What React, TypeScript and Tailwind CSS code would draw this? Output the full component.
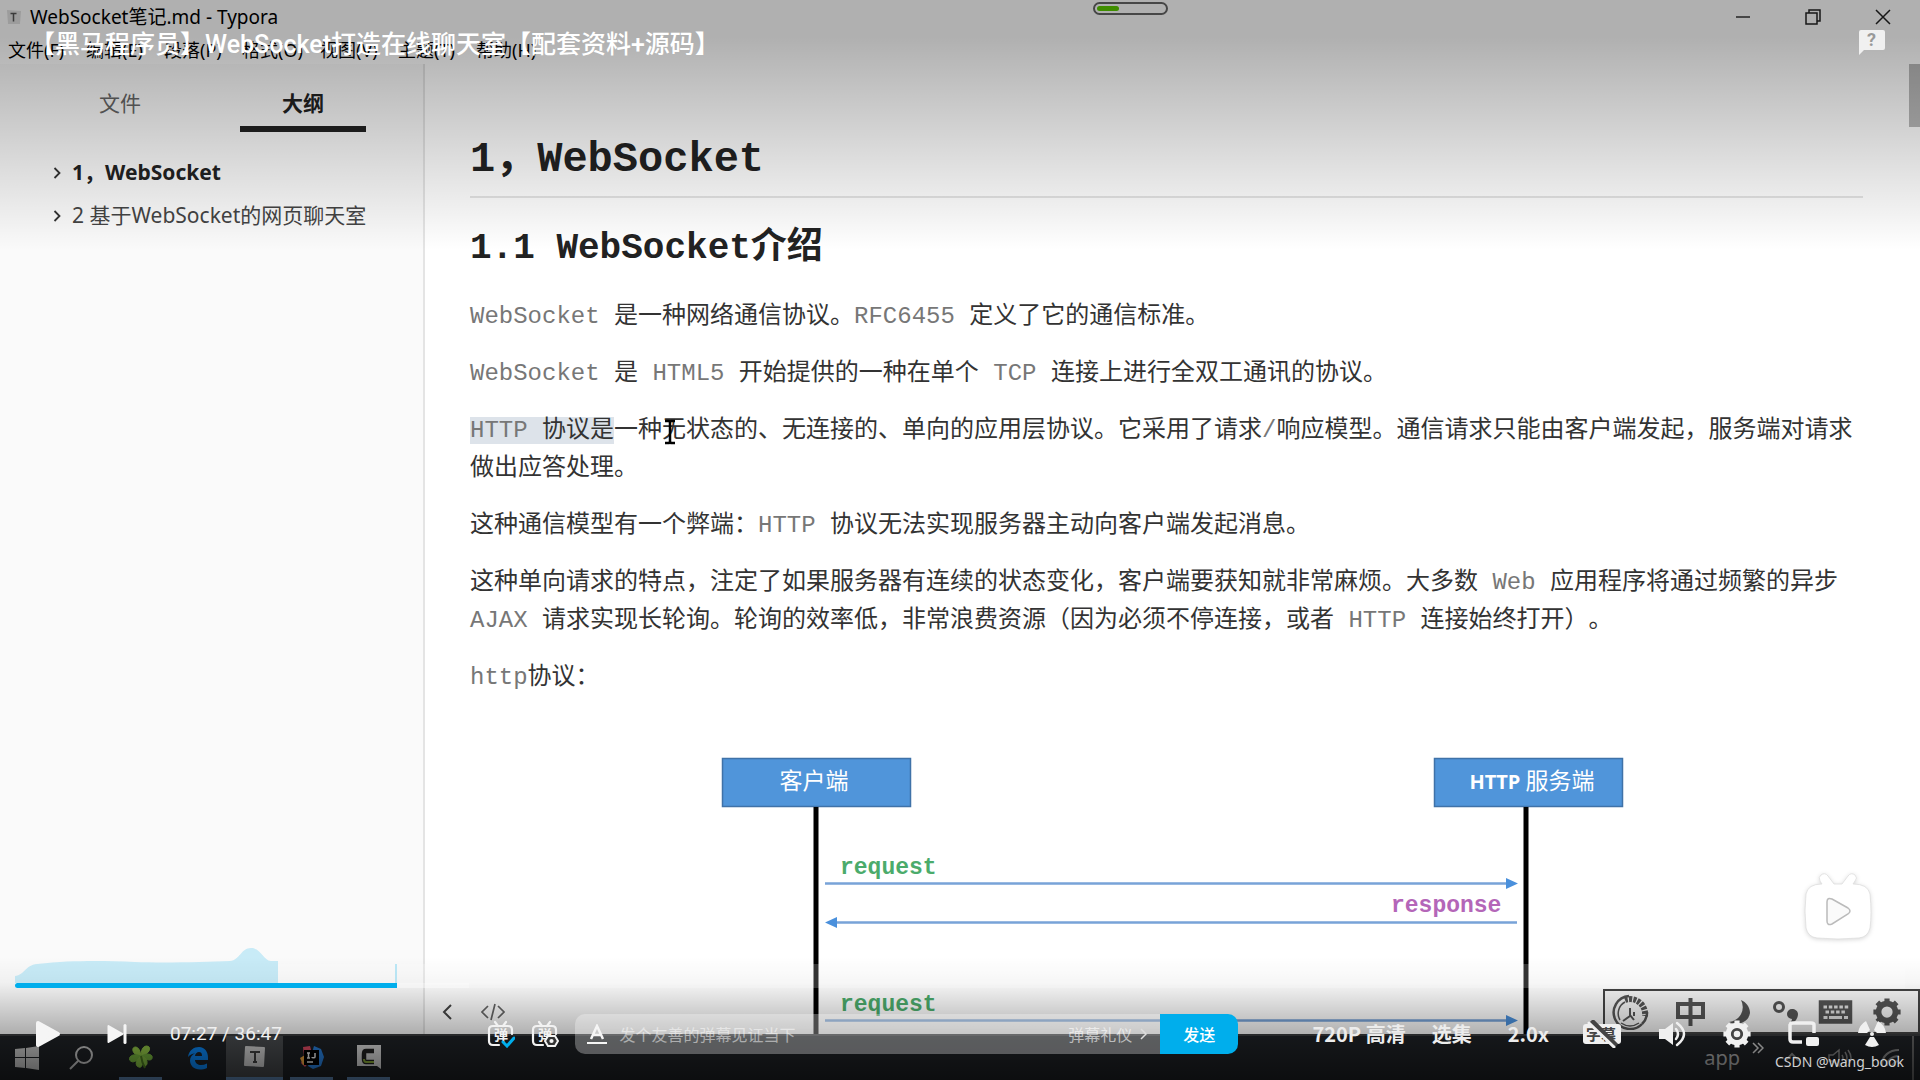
import React from 'react';

const menus = ['文件(F)', '编辑(E)', '段落(P)', '格式(O)', '视图(V)', '主题(T)', '帮助(H)'];

const outline = [
  { title: '1，WebSocket', active: true },
  { title: '2 基于WebSocket的网页聊天室', active: false },
];

// Latin runs are set lighter than the Chinese text around them
function Mixed({ text }: { text: string }) {
  return (
    <>
      {text.split(/([A-Za-z0-9/]+)/).map((part, idx) =>
        idx % 2 === 1 ? (
          <span key={idx} className="text-[#777]">{part}</span>
        ) : (
          part
        ),
      )}
    </>
  );
}

function TitleBar() {
  return (
    <header className="h-16 shrink-0 bg-white font-['Noto_Sans','Noto_Sans_CJK_SC',sans-serif] text-black">
      <div className="flex h-[34px] items-center justify-between pr-[29px] pl-1.5">
        <div className="flex items-center gap-2">
          <svg className="h-4 w-4" viewBox="0 0 16 16">
            <path d="M1 1l14 1-1 13-12 0z" fill="#e2e2e2" />
            <path d="M4.500 4.500h6M7.500 4.500v8" stroke="#555" strokeWidth="1.500" />
          </svg>
          <span className="text-[19px] leading-none">WebSocket笔记.md - Typora</span>
        </div>
        <div className="flex items-center gap-[54px]">
          <button aria-label="最小化">
            <svg className="h-4 w-4" viewBox="0 0 16 16"><path d="M1 8h14" stroke="#333" strokeWidth="1.500" /></svg>
          </button>
          <button aria-label="还原">
            <svg className="h-4 w-4" viewBox="0 0 16 16" fill="none" stroke="#222" strokeWidth="1.500">
              <path d="M1 4h11v11H1zM4 4V1h11v11h-3" />
            </svg>
          </button>
          <button aria-label="关闭">
            <svg className="h-4 w-4" viewBox="0 0 16 16"><path d="M1 1l14 14M15 1L1 15" stroke="#222" strokeWidth="1.500" /></svg>
          </button>
        </div>
      </div>
      <nav className="flex h-[30px] items-center gap-[18px] pt-0.5 pl-2">
        {menus.map((item) => (
          <button key={item} className="w-[60px] text-left text-[18px] leading-none whitespace-nowrap">{item}</button>
        ))}
      </nav>
    </header>
  );
}

function Sidebar() {
  return (
    <aside className="w-[425px] shrink-0 border-r-2 border-[#e4e4e4] bg-[#fafafa] font-['Noto_Sans','Noto_Sans_CJK_SC',sans-serif] text-[#333]">
      <div className="flex justify-evenly pt-[22px] text-[21px] leading-[34px]">
        <button className="w-[126px] pb-3 text-[#666]">文件</button>
        <button className="w-[126px] border-b-6 border-[#222] pb-1.5 font-bold text-[#222]">大纲</button>
      </div>
      <ul className="pt-[19px] pl-[53px] text-[21px]">
        {outline.map((item) => (
          <li key={item.title} className="flex h-[43px] items-center gap-[11px]">
            <svg className="h-3 w-2 shrink-0" viewBox="0 0 8 12"><path d="M1.500 1l5 5-5 5" fill="none" stroke="#333" strokeWidth="1.800" /></svg>
            <a href="#doc" className={item.active ? 'font-bold text-[#222]' : 'text-[#444]'}>{item.title}</a>
          </li>
        ))}
      </ul>
    </aside>
  );
}

function SequenceDiagram() {
  return (
    <svg className="mx-auto mt-[43px] block h-[294px] w-[914px]" viewBox="0 0 914 294">
      <g fill="#5095da" stroke="#3f72a8" strokeWidth="1.500">
        <rect x="12.500" y="18.500" width="188" height="48" />
        <rect x="724.500" y="18.500" width="188" height="48" />
      </g>
      <g className="font-['Noto_Sans_CJK_SC',sans-serif] text-[23px]" fill="#fff" textAnchor="middle">
        <text x="104" y="49">客户端</text>
        <text x="822" y="49"><tspan className="font-['Open_Sans'] text-[20px] font-bold">HTTP</tspan> 服务端</text>
      </g>
      <path d="M106 67v227M816 67v227" stroke="#000" strokeWidth="5" />
      <path d="M115 143.500h682M125 182.500h682M115 280.500h682" stroke="#78a3d8" strokeWidth="2.500" />
      <path d="M796 138l12 5.500-12 5.500zM127 177l-12 5.500 12 5.500zM796 275l12 5.500-12 5.500z" fill="#4a90dc" />
      <g className="font-['Liberation_Mono',monospace] text-[23px] font-bold" fill="#4bab6b">
        <text x="130" y="134">request</text>
        <text x="130" y="271">request</text>
        <text x="681" y="172" fill="#b466b8">response</text>
      </g>
    </svg>
  );
}

function Document() {
  return (
    <main id="doc" className="relative min-w-0 flex-1 overflow-hidden bg-white pt-[71px] pr-[57px] pl-[45px] font-['Liberation_Mono','Noto_Sans_CJK_SC',monospace] text-[#333] [text-spacing-trim:space-all]">
      <h1 className="border-b-2 border-[#e4e4e4] pb-[11px] text-[42px] leading-[50px] font-bold text-[#222]">1，WebSocket</h1>
      <h2 className="mt-[29px] text-[36px] leading-[44px] font-bold text-[#222]">1.1 WebSocket介绍</h2>
      <div className="mt-[27px] space-y-[19px] text-2xl leading-[38px]">
        <p><Mixed text="WebSocket 是一种网络通信协议。RFC6455 定义了它的通信标准。" /></p>
        <p><Mixed text="WebSocket 是 HTML5 开始提供的一种在单个 TCP 连接上进行全双工通讯的协议。" /></p>
        <p>
          <mark className="bg-[#dde3ea] text-inherit"><Mixed text="HTTP 协议是" /></mark>
          一种
          <span className="relative">
            无
            <svg className="absolute top-0 left-0 h-7 w-4" viewBox="0 0 16 28">
              <path d="M3 4h4l1 1 1-1h4M8 5v20M3 26h4l1-1 1 1h4" fill="none" stroke="#000" strokeWidth="2.500" />
            </svg>
          </span>
          <Mixed text="状态的、无连接的、单向的应用层协议。它采用了请求/响应模型。通信请求只能由客户端发起，服务端对请求做出应答处理。" />
        </p>
        <p><Mixed text="这种通信模型有一个弊端：HTTP 协议无法实现服务器主动向客户端发起消息。" /></p>
        <p><Mixed text="这种单向请求的特点，注定了如果服务器有连续的状态变化，客户端要获知就非常麻烦。大多数 Web 应用程序将通过频繁的异步 AJAX 请求实现长轮询。轮询的效率低，非常浪费资源（因为必须不停连接，或者 HTTP 连接始终打开）。" /></p>
        <p><Mixed text="http协议：" /></p>
      </div>
      <SequenceDiagram />

      {/* Scrollbar thumb and the source-mode buttons float over the text */}
      <div className="absolute top-0 right-0 h-[63px] w-[11px] bg-[#b8b8b8]" />
      <div className="absolute bottom-3 left-4 flex items-center gap-7">
        <button aria-label="收起侧栏">
          <svg className="h-5 w-3" viewBox="0 0 12 20"><path d="M10 3l-7 7 7 7" fill="none" stroke="#444" strokeWidth="2" /></svg>
        </button>
        <button aria-label="源代码模式">
          <svg className="h-5 w-6" viewBox="0 0 24 20"><path d="M7 4l-6 6 6 6M17 4l6 6-6 6M14 2l-4 16" fill="none" stroke="#666" strokeWidth="1.700" /></svg>
        </button>
      </div>
    </main>
  );
}

// Eight-toothed cog, drawn with strokes so the page shows through the hole
function Gear({ className, hub }: { className: string; hub?: boolean }) {
  return (
    <svg className={className} viewBox="0 0 32 32" fill="none" stroke="currentColor">
      <circle cx="16" cy="16" r="9" strokeWidth="6" />
      <path
        d="M16 1.500v5M16 25.500v5M1.500 16h5M25.500 16h5M5.700 5.700l3.500 3.500M22.800 22.800l3.500 3.500M26.300 5.700l-3.500 3.500M9.200 22.800l-3.500 3.500"
        strokeWidth="5.500"
      />
      {hub && <circle cx="16" cy="16" r="5" stroke="#444" strokeWidth="3" fill="currentColor" />}
    </svg>
  );
}

const imeIcons = [
  {
    label: '输入法',
    art: (
      <svg className="h-9 w-10" viewBox="0 0 40 36" fill="none" stroke="#555">
        <path d="M31 30A16.500 16.500 0 1 1 18 2" strokeWidth="2.500" />
        <path d="M31 30a16 16 0 0 0 5-12" strokeWidth="2.500" />
        <path d="M9 26A13 13 0 0 1 14 8M10 29q9 6 18 0" strokeWidth="1.500" />
        <path d="M14 6a15 15 0 0 1 20 16" strokeWidth="6" strokeDasharray="3 1.200" />
        <path d="M19 14v8l-7 5M19 21l4 5M23 18v4" strokeWidth="2" />
      </svg>
    ),
  },
  {
    label: '中文',
    art: (
      <svg className="h-8 w-10" viewBox="-6 0 40 32" fill="none" stroke="#555" strokeWidth="4">
        <path d="M3 8h25v13H3zM15.500 2v28" />
      </svg>
    ),
  },
  {
    label: '半角',
    art: (
      <svg className="h-8 w-7" viewBox="0 0 28 32"><path d="M14 4a15 15 0 0 1-12 22c10 5 20-1 21-9 0-6-4-11-9-13z" fill="#555" /></svg>
    ),
  },
  {
    label: '标点',
    art: (
      <svg className="h-8 w-7" viewBox="0 0 28 32">
        <circle cx="7" cy="11" r="4.500" fill="none" stroke="#555" strokeWidth="3" />
        <path d="M20 13a5 5 0 1 0 0 10c0 2-2 4-4 5 6 0 10-5 10-10 0-3-3-5-6-5z" fill="#555" />
      </svg>
    ),
  },
  {
    label: '软键盘',
    art: (
      <svg className="h-6 w-9" viewBox="0 0 36 24" fill="none" stroke="#555">
        <path d="M2 1.500h31v21H2z" strokeWidth="2.500" fill="#555" />
        <path d="M5.500 7h25" stroke="#e4e4e4" strokeWidth="3" strokeDasharray="3.500 1.800" />
        <path d="M7.500 12h21" stroke="#e4e4e4" strokeWidth="3" strokeDasharray="3.500 1.800" />
        <path d="M5.500 17.500h4M11 17.500h13M26 17.500h4" stroke="#e4e4e4" strokeWidth="3" />
      </svg>
    ),
  },
  { label: '设置', art: <Gear className="h-[30px] w-[30px] text-[#555]" /> },
];

function ImeBar() {
  return (
    <div className="absolute right-0 bottom-[46px] flex h-[45px] w-[317px] items-center justify-between border-2 border-[#444] bg-[#f8f8f8] pr-4 pl-1.5">
      {imeIcons.map((icon) => (
        <button key={icon.label} aria-label={icon.label}>{icon.art}</button>
      ))}
    </div>
  );
}

const taskbarApps = [
  {
    name: 'Clover',
    open: true,
    art: (
      <svg className="h-6 w-6" viewBox="0 0 24 24">
        <path d="M12 11Q5 10 4 6q-1-4 3-4 4 1 5 9zM12 11Q12 2 17 1q5 0 3 5-2 4-8 5z" fill="#9ad24a" stroke="#9ad24a" />
        <path d="M12 11Q4 8 1 12q-2 4 3 5 6-1 8-6zM12 11q8-4 11 0 1 4-3 4-5 0-8-4z" fill="#7cbc40" stroke="#7cbc40" />
        <path d="M12 11q-7 6-4 10 4 3 5-1 1-4-1-9zM12 11q7 2 6 8-2 4-4 1-2-4-2-9z" fill="#8cc846" stroke="#8cc846" />
        <path d="M12 11q1 7 4 12" fill="none" stroke="#4f7f22" strokeWidth="2" />
      </svg>
    ),
  },
  {
    name: 'Edge',
    open: false,
    art: (
      <svg className="h-6 w-6" viewBox="0 0 24 24">
        <path d="M2 11C3 4 8 1 13 1c6 0 9 5 9 11v2H9c0 3 3 5 6 5 2 0 4-.5 6-1.500V22c-2 1-5 1.500-7 1.500-6 0-10-4-10-9 0-3 2-6 5-7-3 0-5 1.500-7 3.500zM9 10h7c0-3-1-4-3-4s-4 2-4 4z" fill="#0a8cff" />
      </svg>
    ),
  },
  {
    name: 'Typora',
    open: true,
    current: true,
    art: (
      <svg className="h-6 w-6" viewBox="0 0 24 24">
        <path d="M3 2l18 1-1 18-18-1z" fill="#dcdcdc" stroke="#dcdcdc" strokeWidth="2" strokeLinejoin="round" />
        <path d="M7 7h10M12 7v10M10 17h4" stroke="#444" strokeWidth="2" />
      </svg>
    ),
  },
  {
    name: 'IntelliJ IDEA',
    open: true,
    art: (
      <svg className="h-6 w-6" viewBox="0 0 24 24">
        <path d="M3 2l7-1 3 11-8 10-4-4 3-6z" fill="#f0506a" />
        <path d="M14 1l7 3 3 8-3 9-8 3-5-3z" fill="#2a88ec" />
        <path d="M0 13l5-3 4 10-6 0z" fill="#ffb040" />
        <path d="M4 5h15v15H4z" fill="#000" />
        <path d="M7 8h3M8.500 8v5M7 13h3M15 8v4c0 1-3 1-3 0M7 17h6" fill="none" stroke="#fff" strokeWidth="1.500" />
      </svg>
    ),
  },
  {
    name: 'Camtasia',
    open: true,
    art: (
      <svg className="h-6 w-6" viewBox="0 0 24 24">
        <path d="M0 0h24v24l-4-3H0z" fill="#e4e4e4" />
        <path d="M17 6H9q-2 0-2 3v5q0 3 2 3h8" fill="none" stroke="#222" strokeWidth="4.500" />
        <path d="M17 17H9q-2 0-2-3" fill="none" stroke="#8fb03c" strokeWidth="2" />
      </svg>
    ),
  },
];

function Taskbar() {
  return (
    <footer className="flex h-[46px] shrink-0 items-stretch border-t-2 border-[#3a3c3e] bg-[#1f2226]">
      <button className="flex w-[54px] items-center justify-center" aria-label="开始">
        <svg className="h-6 w-6" viewBox="0 0 24 24"><path d="M0 3l10-1v9H0zM11 2l13-2v11H11zM0 12h10v10l-10-1zM11 12h13v12l-13-2z" fill="#d0d0d0" /></svg>
      </button>
      <button className="flex w-[54px] items-center justify-center" aria-label="搜索">
        <svg className="h-6 w-6" viewBox="0 0 24 24" fill="none" stroke="#d0d0d0" strokeWidth="2"><circle cx="15" cy="9" r="8" /><path d="M9 15l-8 8" /></svg>
      </button>
      <div className="ml-1 flex">
        {taskbarApps.map((app) => (
          <button
            key={app.name}
            aria-label={app.name}
            className={app.current ? 'flex w-[57px] flex-col items-center bg-[#4a4d50]' : 'flex w-[57px] flex-col items-center'}
          >
            <span className="flex flex-1 items-center">{app.art}</span>
            {app.open && <span className={app.current ? 'h-[3px] w-full bg-[#6590c0]' : 'h-[3px] w-[43px] bg-[#6590c0]'} />}
          </button>
        ))}
      </div>
      <div className="ml-auto flex items-center gap-3 pr-1.5 font-['Noto_Sans',sans-serif] text-[20px] text-[#b4b4b4]">
        <span>app</span>
        <svg className="mb-5 h-3 w-3" viewBox="0 0 12 12"><path d="M1 1l5 5-5 5M6 1l5 5-5 5" fill="none" stroke="#ddd" strokeWidth="1.500" /></svg>
        <div className="flex items-center gap-7 pl-2">
          <svg className="h-4 w-4" viewBox="0 0 16 16"><path d="M1 11l7-7 7 7" fill="none" stroke="#888" strokeWidth="2" /></svg>
          <svg className="h-5 w-6" viewBox="0 0 24 20" fill="none" stroke="#888" strokeWidth="1.500"><path d="M1 7h4l6-5v16l-6-5H1zM14 7q2 3 0 6M17 4q4 6 0 12M20 2q6 8 0 16" /></svg>
          <svg className="h-5 w-5" viewBox="0 0 20 20" fill="none" stroke="#888" strokeWidth="2"><path d="M2 17C2 8 9 2 19 2M7 18c0-6 5-10 12-10M12 19c0-3 3-6 7-6" /></svg>
        </div>
        <span className="h-11 w-0.5 bg-[#666]" />
      </div>
    </footer>
  );
}

function DanmuIcon({ children }: { children: React.ReactNode }) {
  return (
    <svg className="h-7 w-7" viewBox="0 0 28 28" fill="none" stroke="#f2f2f2" strokeWidth="2.200" strokeLinecap="round">
      <path d="M12 25H6q-4 0-4-4V10q0-4 4-4h15q4 0 4 4v4M8 2l3 4M19 2l-3 4" />
      <text x="7" y="20" fontSize="14" fill="#f2f2f2" stroke="none" fontWeight="bold">弹</text>
      {children}
    </svg>
  );
}

function PlayerBar() {
  return (
    <div className="px-[15px]">
      {/* Heat curve above the progress bar */}
      <div className="flex h-10 items-end">
        <svg className="h-[35px] w-[263px] shrink-0" viewBox="0 0 263 35">
          <path d="M0 35V28C10 27 10 17 22 16C60 12 90 13 120 14S190 14 215 13C225 12 226 0 236 0S248 12 256 13H263V35z" fill="#00aeec" fillOpacity=".2" />
        </svg>
        <div className="flex h-[19px] flex-1 bg-white/20">
          <span className="ml-[117px] w-0.5 bg-[#00aeec]/25" />
        </div>
      </div>
      <div className="h-[5px] bg-white/20">
        <div className="h-full w-[24%] bg-white/30">
          <div className="h-full w-[382px] rounded-l-sm bg-[#00aeec]" />
        </div>
      </div>

      <div className="mt-[26px] mb-[26px] flex h-10 items-center font-['Noto_Sans_CJK_SC',sans-serif] text-[#f0f0f0]">
        <button className="ml-5" aria-label="播放">
          <svg className="h-7 w-7" viewBox="0 0 28 28"><path d="M3 3l20 11L3 25z" fill="#f5f5f5" stroke="#f5f5f5" strokeWidth="4" strokeLinejoin="round" /></svg>
        </button>
        <button className="ml-11" aria-label="下一个">
          <svg className="h-5 w-5" viewBox="0 0 20 20"><path d="M1.500 2l14 8-14 8z" fill="#f5f5f5" stroke="#f5f5f5" strokeWidth="2" strokeLinejoin="round" /><path d="M18 1.500v17" stroke="#f5f5f5" strokeWidth="3" strokeLinecap="round" /></svg>
        </button>
        <span className="ml-[43px] w-[114px] font-['Roboto',sans-serif] text-[19px] whitespace-nowrap">07:27 / 36:47</span>

        <div className="ml-auto flex items-center gap-4">
          <button aria-label="关闭弹幕">
            <DanmuIcon><path d="M16 22l4 4 7-8" stroke="#00aeec" strokeWidth="3" /></DanmuIcon>
          </button>
          <button aria-label="弹幕设置">
            <DanmuIcon>
              <path d="M17 16h7l3 5-3 5h-7l-3-5z" fill="#333" strokeWidth="2" />
              <circle cx="20.500" cy="21" r="1" />
            </DanmuIcon>
          </button>
          <div className="flex h-10 w-[663px] overflow-hidden rounded-[10px]">
            <div className="flex flex-1 items-center bg-white/30 pr-3 pl-3">
              <svg className="h-5 w-5" viewBox="0 0 20 20" fill="none" stroke="#f5f5f5"><path d="M4 15L10 2l6 13M6 11h8" strokeWidth="2.500" /><path d="M0 19h20" strokeWidth="2" /></svg>
              <input
                aria-label="弹幕"
                placeholder="发个友善的弹幕见证当下"
                className="ml-3 min-w-0 flex-1 bg-transparent text-base text-white outline-none placeholder:text-white/50"
              />
              <a href="#rules" className="flex items-center gap-2 text-base text-white/60">
                弹幕礼仪
                <svg className="h-3 w-2" viewBox="0 0 8 12"><path d="M1 1l5 5-5 5" fill="none" stroke="#ddd" strokeWidth="1.500" /></svg>
              </a>
            </div>
            <button className="w-[78px] bg-[#00aeec] text-base font-medium text-white">发送</button>
          </div>
        </div>

        <div className="ml-[74px] flex items-center text-[20px] font-bold text-[#ececec]">
          <button className="text-left whitespace-nowrap">720P 高清</button>
          <button className="ml-[26px]">选集</button>
          <button className="ml-9">2.0x</button>
        </div>
        <div className="mr-[17px] ml-[33px] flex items-center gap-9 text-[#f0f0f0]">
          <button aria-label="字幕">
            <svg className="h-7 w-10" viewBox="0 0 40 28">
              <rect x="1" y="4" width="38" height="20" rx="3" fill="#f0f0f0" />
              <text x="4" y="20" fontSize="15" fontWeight="bold" fill="#444">字幕</text>
              <path d="M9 1l25 25" stroke="#444" strokeWidth="6" />
              <path d="M7 3l25 24" stroke="#f0f0f0" strokeWidth="3" strokeLinecap="round" />
            </svg>
          </button>
          <button aria-label="音量">
            <svg className="h-7 w-7" viewBox="0 0 28 28"><path d="M1 9h6l8-6v22l-8-6H1z" fill="#f0f0f0" /><path d="M18 9q4 5 0 10M19 3q14 11 0 22" fill="none" stroke="#f0f0f0" strokeWidth="2.500" strokeLinecap="round" /></svg>
          </button>
          <button aria-label="设置"><Gear className="h-[30px] w-[30px]" hub /></button>
          <button aria-label="小窗">
            <svg className="h-7 w-8" viewBox="0 0 32 28"><path d="M14 22H5q-3 0-3-3V5q0-2 3-2h18q3 0 3 2v8" fill="none" stroke="#f0f0f0" strokeWidth="3.500" /><rect x="18" y="17" width="13" height="9" rx="2" fill="#f0f0f0" /></svg>
          </button>
          <button aria-label="退出全屏">
            <svg className="h-7 w-8" viewBox="0 0 32 28" fill="#f0f0f0">
              <circle cx="16" cy="14" r="2" />
              <path d="M2 13Q3 5 10 1l4 9-3 3zM30 13Q29 5 22 1l-4 9 3 3zM14 17h4l5 8q-7 4-14 0z" />
            </svg>
          </button>
        </div>
      </div>
    </div>
  );
}

export default function App() {
  return (
    <div className="relative flex h-screen flex-col overflow-hidden bg-black">
      <TitleBar />
      <div className="flex min-h-0 flex-1">
        <Sidebar />
        <Document />
      </div>
      <Taskbar />
      <ImeBar />
      <div className="absolute top-0.5 left-[1093px] h-[13px] w-[75px] rounded-full border-2 border-[#666] bg-white p-0.5">
        <div className="h-full w-[22px] rounded-full bg-[#5ccc00]" />
      </div>

      {/* Player chrome over the video frame */}
      <div className="absolute inset-0 flex flex-col justify-between">
        <div className="flex h-[250px] items-start justify-between bg-linear-to-b from-black/31 from-15% to-transparent pt-[27px] pr-[34px] pl-[30px]">
          <h1 className="font-['Roboto','Noto_Sans_CJK_SC',sans-serif] text-[25px] leading-9 font-medium text-white [text-spacing-trim:space-all]">
            【黑马程序员】WebSocket打造在线聊天室【配套资料+源码】
          </h1>
          <button aria-label="反馈">
            <svg className="mt-0.5 h-7 w-7" viewBox="0 0 28 28">
              <path d="M3 1h22q2 0 2 2v16q0 2-2 2H6l-5 5V3q0-2 2-2z" fill="#f0f0f0" />
              <text x="9" y="17" className="font-['Roboto'] text-[18px] font-bold" fill="#999">?</text>
            </svg>
          </button>
        </div>
        <div className="flex flex-col">
          <svg className="mr-11 h-[72px] w-[76px] self-end overflow-visible drop-shadow-sm" viewBox="0 0 76 72" fill="#fff" stroke="#ddd" strokeWidth=".8">
            <path d="M21 4q4-3 7 1l6 8h8l6-8q3-4 7-1 3 3 0 6l-2 3q15 0 17 10 2 20 0 34-2 9-11 10-21 2-42 0-9-1-11-10-2-17 0-34 2-10 16-10l-2-3q-2-4 1-6z" />
            <path d="M27 31q0-5 5-3l16 9q4 3 0 6l-16 10q-5 2-5-3z" fill="#fafafa" stroke="#bbb" strokeWidth="1.500" />
          </svg>
          <div className="bg-[linear-gradient(to_bottom,transparent_10%,rgb(0_0_0/0.04)_29%,rgb(0_0_0/0.3)_66%,rgb(0_0_0/0.6)_100%)]">
            <PlayerBar />
          </div>
        </div>
      </div>
      <div className="absolute right-4 bottom-2 font-['Noto_Sans',sans-serif] text-sm text-[#d0d0d0]">CSDN @wang_book</div>
    </div>
  );
}
